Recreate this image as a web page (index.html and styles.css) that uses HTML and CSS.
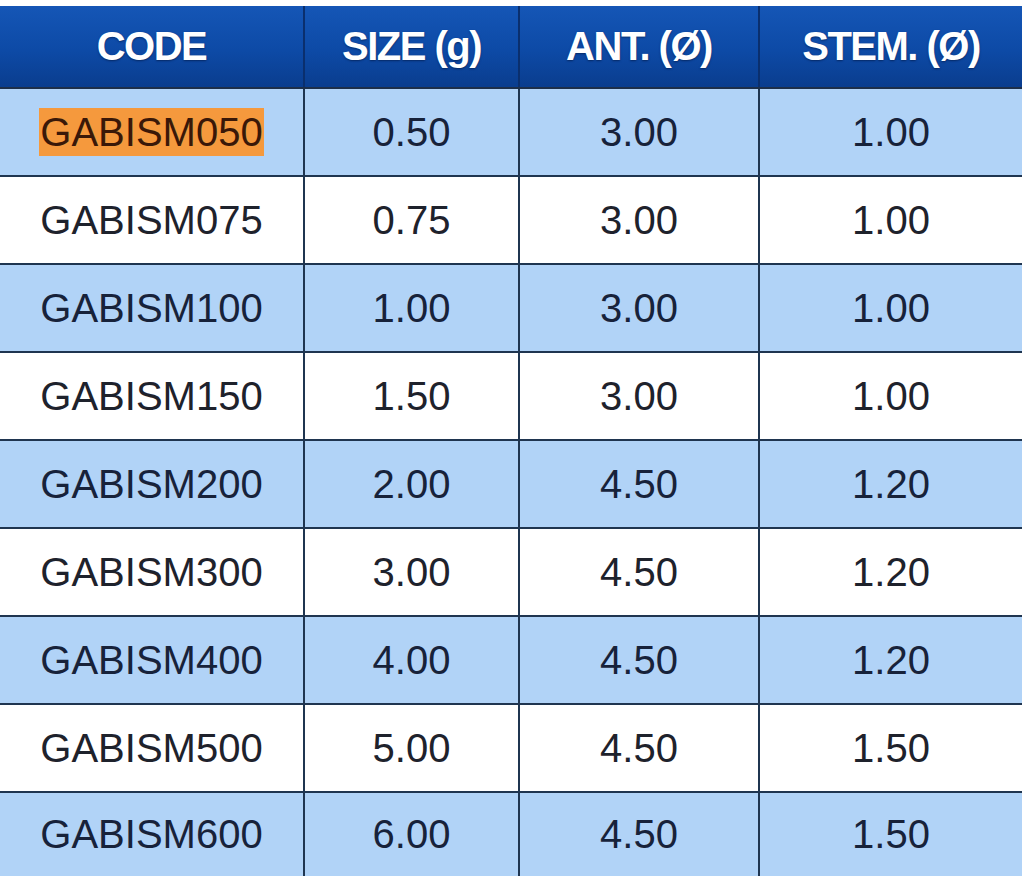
FILE: index.html
```html
<!DOCTYPE html>
<html>
<head>
<meta charset="utf-8">
<link rel="stylesheet" href="styles.css">
</head>
<body>
<table class="specs">
  <colgroup>
    <col class="c1"><col class="c2"><col class="c3"><col class="c4">
  </colgroup>
  <thead>
    <tr>
      <th>CODE</th>
      <th>SIZE (g)</th>
      <th>ANT. (Ø)</th>
      <th>STEM. (Ø)</th>
    </tr>
  </thead>
  <tbody>
    <tr class="blue"><td><span class="mark">GABISM050</span></td><td>0.50</td><td>3.00</td><td>1.00</td></tr>
    <tr class="white"><td>GABISM075</td><td>0.75</td><td>3.00</td><td>1.00</td></tr>
    <tr class="blue"><td>GABISM100</td><td>1.00</td><td>3.00</td><td>1.00</td></tr>
    <tr class="white"><td>GABISM150</td><td>1.50</td><td>3.00</td><td>1.00</td></tr>
    <tr class="blue"><td>GABISM200</td><td>2.00</td><td>4.50</td><td>1.20</td></tr>
    <tr class="white"><td>GABISM300</td><td>3.00</td><td>4.50</td><td>1.20</td></tr>
    <tr class="blue"><td>GABISM400</td><td>4.00</td><td>4.50</td><td>1.20</td></tr>
    <tr class="white"><td>GABISM500</td><td>5.00</td><td>4.50</td><td>1.50</td></tr>
    <tr class="blue"><td>GABISM600</td><td>6.00</td><td>4.50</td><td>1.50</td></tr>
  </tbody>
</table>
</body>
</html>
```

FILE: styles.css
```css
html, body {
  margin: 0;
  padding: 0;
  background: #ffffff;
}

body {
  padding-top: 6px;
  font-family: "Liberation Sans", Arial, sans-serif;
}

.specs {
  width: 1022px;
  border-collapse: collapse;
  table-layout: fixed;
}

.specs col.c1 { width: 304px; }
.specs col.c2 { width: 215px; }
.specs col.c3 { width: 240px; }
.specs col.c4 { width: 263px; }

.specs th,
.specs td {
  padding: 0;
  text-align: center;
  vertical-align: middle;
}

.specs th {
  height: 81px;
  background: linear-gradient(to bottom, #1556b6 0%, #0d4aa6 55%, #0a3d8e 100%);
  color: #ffffff;
  font-weight: bold;
  font-size: 40px;
  letter-spacing: -1.5px;
  text-shadow: 0 1px 2px rgba(0, 20, 60, 0.6);
  border-left: 2px solid #0a2f6e;
  border-right: 2px solid #0a2f6e;
  border-bottom: 2px solid #1d2f4a;
}

.specs th:first-child { border-left: none; }
.specs th:last-child { border-right: none; }

.specs td {
  height: 86px;
  font-size: 40px;
  color: #1e222c;
  border: 2px solid #1f3550;
}

.specs td:first-child { border-left: none; }
.specs td:last-child { border-right: none; }
.specs tbody tr:last-child td {
  border-bottom: none;
  height: 83px;
}

.specs tr.blue td {
  background: #b1d3f7;
  color: #17223a;
}

.specs tr.white td {
  background: #ffffff;
}

.mark {
  background: #f5993d;
  color: #3a1808;
  padding: 2px 1px;
}
```
